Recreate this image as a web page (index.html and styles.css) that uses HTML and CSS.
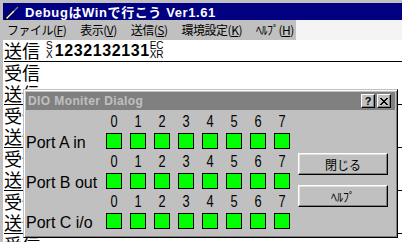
FILE: index.html
```html
<!DOCTYPE html>
<html lang="ja">
<head>
    <meta charset="UTF-8">
    <title>DebugはWinで行こう</title>
    <link rel="stylesheet" href="styles.css">
</head>
<body>
    <div class="window">
        <div class="titlebar">
            <svg class="app-icon" width="16" height="16" viewBox="0 0 16 16">
                <path d="M2.5 14.5 L13.5 3.5" stroke="#000" stroke-width="3" stroke-linecap="round"/>
                <path d="M2.5 14.5 L10 7" stroke="#fff" stroke-width="1.4"/>
                <path d="M10 7 L14 3" stroke="#5a78ff" stroke-width="1.6"/>
            </svg>
            <span class="title">DebugはWinで行こう Ver1.61</span>
        </div>
        <div class="menubar">
            <div class="menu-items">
                <span class="menu">ファイル(<u>F</u>)</span>
                <span class="menu">表示(<u>V</u>)</span>
                <span class="menu">送信(<u>S</u>)</span>
                <span class="menu">環境設定(<u>K</u>)</span>
                <span class="menu">ﾍﾙﾌﾟ(<u>H</u>)</span>
            </div>
        </div>
        <div class="log">
            <div class="row send">送信 <span class="ctl stx"><i>S</i><i>X</i></span><b class="data">1232132131</b><span class="ctl"><i>E</i><i>X</i></span><span class="ctl"><i>C</i><i>R</i></span></div>
            <div class="row">受信</div>
            <div class="row send">送信</div>
            <div class="row">受信</div>
            <div class="row send">送信</div>
            <div class="row">受信</div>
            <div class="row send">送信</div>
            <div class="row">受信</div>
            <div class="row send">送信</div>
            <div class="row">受信</div>
        </div>
    </div>

    <div class="dialog">
        <div class="dlg-title">
            <span class="dlg-caption">DIO Moniter Dialog</span>
            <div class="caption-btns">
                <span class="cbtn help">?</span>
                <span class="cbtn close">
                    <svg width="8" height="7" viewBox="0 0 8 7"><path d="M0 0h2v1h1v1h2v-1h1v-1h2v1h-1v1h-1v1h-1v1h1v1h1v1h1v1h-2v-1h-1v-1h-2v1h-1v1h-2v-1h1v-1h1v-1h1v-1h-1v-1h-1v-1h-1z" fill="#000"/></svg>
                </span>
            </div>
        </div>
        <div class="dlg-body">
            <div class="ports">
                <div class="port">
                    <span></span>
                    <span class="bit-no">0</span><span class="bit-no">1</span><span class="bit-no">2</span><span class="bit-no">3</span>
                    <span class="bit-no">4</span><span class="bit-no">5</span><span class="bit-no">6</span><span class="bit-no">7</span>
                    <span class="port-name">Port A in</span>
                    <i class="led"></i><i class="led"></i><i class="led"></i><i class="led"></i>
                    <i class="led"></i><i class="led"></i><i class="led"></i><i class="led"></i>
                </div>
                <div class="port">
                    <span></span>
                    <span class="bit-no">0</span><span class="bit-no">1</span><span class="bit-no">2</span><span class="bit-no">3</span>
                    <span class="bit-no">4</span><span class="bit-no">5</span><span class="bit-no">6</span><span class="bit-no">7</span>
                    <span class="port-name">Port B out</span>
                    <i class="led"></i><i class="led"></i><i class="led"></i><i class="led"></i>
                    <i class="led"></i><i class="led"></i><i class="led"></i><i class="led"></i>
                </div>
                <div class="port">
                    <span></span>
                    <span class="bit-no">0</span><span class="bit-no">1</span><span class="bit-no">2</span><span class="bit-no">3</span>
                    <span class="bit-no">4</span><span class="bit-no">5</span><span class="bit-no">6</span><span class="bit-no">7</span>
                    <span class="port-name">Port C i/o</span>
                    <i class="led"></i><i class="led"></i><i class="led"></i><i class="led"></i>
                    <i class="led"></i><i class="led"></i><i class="led"></i><i class="led"></i>
                </div>
            </div>
            <div class="buttons">
                <button class="push">閉じる</button>
                <button class="push">ﾍﾙﾌﾟ</button>
            </div>
        </div>
    </div>
</body>
</html>
```

FILE: styles.css
```css
body {
    margin: 0;
    width: 402px;
    height: 242px;
    overflow: hidden;
    position: relative;
    background: #fff;
    font-family: "Noto Sans CJK JP", sans-serif;
}

.window {
    height: 239px;
    overflow: hidden;
    border-top: 3px solid #c0c0c0;
    border-left: 3px solid #c0c0c0;
}

/* main title bar */
.titlebar {
    height: 17px;
    background: #000080;
    color: #fff;
    display: flex;
    align-items: center;
    padding-left: 1px;
}

.app-icon {
    flex: none;
}

.title {
    margin-left: 5px;
    font-family: "Liberation Sans", "Noto Sans CJK JP", sans-serif;
    font-weight: bold;
    font-size: 13px;
    letter-spacing: 0.6px;
    white-space: nowrap;
}

/* menu */
.menubar {
    height: 20px;
    background: #f4f4f4;
}

.menu-items {
    width: 293px;
    height: 20px;
    background: #c0c0c0;
    display: flex;
    gap: 14px;
    padding-left: 4px;
    box-sizing: border-box;
}

.menu {
    font-size: 12px;
    line-height: 20px;
    letter-spacing: -0.5px;
    white-space: nowrap;
    color: #000;
}

.menu u {
    text-decoration: underline;
}

/* log area */
.log {
    padding-left: 1px;
}

.row {
    height: 21px;
    line-height: 21px;
    font-size: 18px;
    white-space: nowrap;
    display: flex;
    align-items: center;
}

.row.send {
    border-bottom: 1px solid #000;
}

.ctl {
    display: inline-flex;
    flex-direction: column;
    font-family: "Liberation Sans", sans-serif;
    font-size: 10px;
    line-height: 9px;
    margin-top: -1px;
}

.ctl i {
    font-style: normal;
}

.ctl.stx {
    margin-left: 6px;
    margin-right: 2px;
    align-items: center;
}

.data {
    font-family: "Liberation Sans", sans-serif;
    font-size: 16px;
    letter-spacing: 0.6px;
}

/* dialog */
.dialog {
    position: absolute;
    left: 23px;
    top: 89px;
    width: 375px;
    height: 149px;
    box-sizing: border-box;
    border: 1px solid;
    border-color: #c0c0c0 #000 #000 #c0c0c0;
    box-shadow: inset 1px 1px #fff, inset -1px -1px #808080;
    padding: 2px;
    background: #c0c0c0;
}

.dlg-title {
    height: 18px;
    background: #808080;
    display: flex;
    align-items: center;
    justify-content: space-between;
    padding: 0 4px 0 2px;
}

.dlg-caption {
    color: #c0c0c0;
    font-family: "Liberation Sans", sans-serif;
    font-weight: bold;
    font-size: 12px;
    letter-spacing: 0.4px;
}

.caption-btns {
    display: flex;
    gap: 2px;
}

.cbtn {
    width: 14px;
    height: 14px;
    box-sizing: border-box;
    background: #c0c0c0;
    border: 1px solid;
    border-color: #fff #000 #000 #fff;
    box-shadow: inset -1px -1px #808080;
    display: flex;
    align-items: center;
    justify-content: center;
    font-family: "Liberation Sans", sans-serif;
    font-weight: bold;
    font-size: 11px;
    line-height: 12px;
    color: #000;
}

.dlg-body {
    display: flex;
}

.ports {
    width: 272px;
    padding-top: 3px;
}

.port {
    display: grid;
    grid-template-columns: 80px repeat(8, 24px);
    grid-template-rows: 17px 16px;
    row-gap: 3px;
    margin-bottom: 4px;
    font-family: "Liberation Sans", sans-serif;
    font-size: 16px;
    color: #000;
}

.bit-no {
    width: 16px;
    text-align: center;
    line-height: 17px;
    transform: scaleX(0.8);
}

.port-name {
    line-height: 16px;
    padding-top: 2px;
    white-space: nowrap;
}

.led {
    width: 16px;
    height: 16px;
    box-sizing: border-box;
    border: 1px solid #000;
    background: #00ff00;
}

.buttons {
    display: flex;
    flex-direction: column;
    gap: 10px;
    padding-top: 43px;
}

.push {
    width: 90px;
    height: 22px;
    box-sizing: border-box;
    margin: 0;
    padding: 0;
    background: #c0c0c0;
    border: 1px solid;
    border-color: #fff #000 #000 #fff;
    box-shadow: inset -1px -1px #808080, inset 1px 1px #dfdfdf;
    font-family: "Noto Sans CJK JP", sans-serif;
    font-size: 12px;
    color: #000;
}
```
